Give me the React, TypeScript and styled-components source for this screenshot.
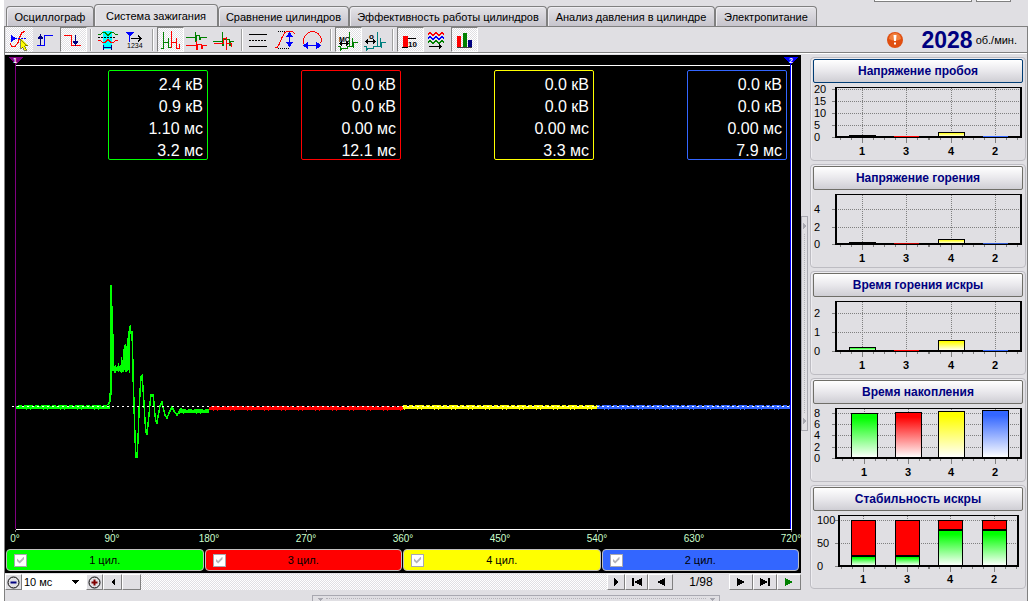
import React from "react";
import styled, { createGlobalStyle, css } from "styled-components";

const FACE = "#e0dfe3";
const NAVY = "#000080";
const DITHER = `repeating-conic-gradient(#fff 0 25%, ${FACE} 0 50%) 0 0 / 2px 2px`;

const GlobalStyle = createGlobalStyle`
  * { box-sizing: border-box; }
  body {
    margin: 0;
    background: #fff;
    color: #000;
    font: 11px/14px "Liberation Sans", Arial, sans-serif;
  }
  button, select { font: inherit; color: inherit; }
`;

const Page = styled.div`
  display: flex;
  flex-direction: column;
  min-height: 100vh;
  margin: 0 4px;
  background: ${FACE};
`;

const Header = styled.header`
  display: flex;
  justify-content: space-between;
  height: 26px;
`;

const TabList = styled.nav`
  display: flex;
  align-items: flex-end;
  padding-left: 2px;
`;

const Tab = styled.button<{ $width: number; $active?: boolean }>`
  width: ${(p) => p.$width}px;
  height: ${(p) => (p.$active ? 23 : 20)}px;
  margin-bottom: ${(p) => (p.$active ? -1 : 0)}px;
  padding: 0;
  border: 1px solid #808080;
  border-bottom: 0;
  border-radius: 4px 4px 0 0;
  background: ${(p) => (p.$active ? FACE : "linear-gradient(#e4e3e7, #c6c4cc)")};
  box-shadow: inset 1px 1px 0 #eeedf1;
  white-space: nowrap;
`;

const CaptionBoxes = styled.div`
  display: flex;
  gap: 4px;
  padding-right: 17px;
`;

const CaptionBox = styled.span<{ $width: number }>`
  width: ${(p) => p.$width}px;
  height: 2px;
  background: #fff;
  border: 1px solid #808080;
  border-top: 0;
`;

const Body = styled.div`
  flex: 1;
  display: flex;
  flex-direction: column;
  border: 1px solid #808080;
  border-bottom: 0;
`;

const Toolbar = styled.div`
  display: flex;
  align-items: flex-start;
  height: 28px;
  padding: 0 10px 0 1px;
  background: linear-gradient(#808080, #808080) 0 25px / 100% 1px no-repeat,
    linear-gradient(#fff, #fff) 0 26px / 100% 1px no-repeat;
`;

const ToolButton = styled.button<{ $state?: "pressed" | "hot" }>`
  display: block;
  width: 27px;
  height: 25px;
  padding: 0;
  border: 1px solid transparent;
  background: transparent;
  ${(p) => p.$state && css`background: ${DITHER};`}
  ${(p) =>
    p.$state === "pressed" &&
    css`border-color: #808080 #fff #fff #808080;`}
  svg { display: block; width: 25px; height: 23px; }
`;

const Separator = styled.span`
  width: 2px;
  height: 22px;
  margin: 2px 3px 0;
  border-left: 1px solid #a0a0a0;
  border-right: 1px solid #fff;
`;

const Rpm = styled.div`
  display: flex;
  align-items: center;
  height: 26px;
  margin-left: auto;
  gap: 3px;
  svg { margin-right: 15px; }
`;

const RpmValue = styled.strong`
  color: ${NAVY};
  font-size: 23px;
  line-height: 24px;
`;

const Main = styled.main`
  flex: 1;
  display: flex;
`;

const ScopeColumn = styled.section`
  flex: 1;
  min-width: 0;
  display: flex;
  flex-direction: column;
`;

const Scope = styled.div`
  position: relative;
  flex: 1;
  display: flex;
  flex-direction: column;
  min-height: 300px;
  background: #000;
`;

const Plot = styled.svg`
  flex: 1;
  width: 100%;
  min-height: 0;
  height: 0;
`;

const Axis = styled.div`
  display: flex;
  justify-content: space-between;
  height: 17px;
  padding: 0 10px;
  color: #ccffcc;
  font-size: 10px;
  line-height: 14px;
  overflow: hidden;
`;

const AxisLabel = styled.span`
  display: flex;
  justify-content: center;
  width: 0;
`;

const Readouts = styled.div`
  position: absolute;
  top: 15px;
  left: 10px;
  right: 14px;
  display: grid;
  grid-template-columns: repeat(4, 1fr);
  justify-items: end;
`;

const Readout = styled.div<{ $color: string }>`
  width: 100px;
  padding: 3px 4px 0 0;
  height: 90px;
  border: 1px solid ${(p) => p.$color};
  border-radius: 2px;
  color: #fff;
  font-size: 16px;
  line-height: 22px;
  text-align: right;
`;

const Legend = styled.div`
  display: grid;
  grid-template-columns: repeat(4, 1fr);
  gap: 1px;
  padding: 0 2px 2px 1px;
  background: #000;
`;

const Cylinder = styled.label<{ $color: string }>`
  display: grid;
  grid-template-columns: 1fr auto 1fr;
  align-items: center;
  height: 22px;
  padding: 0 7px;
  border: 1px solid #c0c0c0;
  border-radius: 4px;
  background: ${(p) => p.$color};
`;

const Check = styled.input`
  appearance: none;
  display: grid;
  place-items: center;
  width: 13px;
  height: 13px;
  margin: 0;
  border: 1px solid #a8a8b0;
  background: #fff;
  &::after {
    content: "";
    width: 7px;
    height: 7px;
    background: #b4b3b9;
    clip-path: polygon(0 30%, 38% 64%, 100% 0, 100% 38%, 38% 100%, 0 66%);
  }
`;

const Transport = styled.div`
  display: flex;
  height: 18px;
  padding: 1px 0;
`;

const FlatButton = styled.button<{ $width: number }>`
  display: flex;
  align-items: center;
  justify-content: center;
  width: ${(p) => p.$width}px;
  height: 16px;
  padding: 0;
  border: 1px solid;
  border-color: #fff #808080 #808080 #fff;
  background: ${FACE};
`;

const ScaleBox = styled.div`
  display: flex;
  align-items: center;
  width: 64px;
  padding-right: 7px;
  background: #fff;
`;

const ScaleSelect = styled.select`
  flex: 1;
  appearance: none;
  padding: 0 2px;
  border: 0;
  background: #fff;
`;

const Track = styled.div`
  flex: 1;
  background: ${DITHER};
`;

const Position = styled.output`
  width: 56px;
  text-align: center;
  font-size: 12px;
  line-height: 16px;
`;

const Splitter = styled.div`
  display: flex;
  align-items: center;
  width: 7px;
  margin-right: 2px;
`;

const SplitterGrip = styled.div`
  display: flex;
  flex-direction: column;
  justify-content: space-between;
  align-items: center;
  width: 7px;
  height: 215px;
  padding: 4px 0;
  border: 1px solid #a8a8b0;
`;

const GripDots = styled.span<{ $row?: boolean }>`
  flex: 1;
  margin: 3px;
  border: 0 dotted #b4b3b9;
  ${(p) => (p.$row ? css`border-top-width: 1px;` : css`border-left-width: 1px;`)}
`;

const Footer = styled.footer`
  display: flex;
  justify-content: center;
  height: 11px;
  padding: 4px 1px 0 0;
`;

const FooterGrip = styled.div`
  display: flex;
  align-items: center;
  width: 408px;
  height: 7px;
  padding: 0 4px;
  border: 1px solid #a8a8b0;
`;

const Gauges = styled.aside`
  display: flex;
  flex-direction: column;
  gap: 3px;
  width: 217px;
  padding: 2px 1px 2px 0;
`;

const Gauge = styled.section`
  height: 104px;
  padding: 1px 2px;
  border: 1px solid #bdbcc2;
  border-radius: 4px;
  box-shadow: inset 1px 1px 0 #eeedf1;
`;

const GaugeTitle = styled.button<{ $focused?: boolean }>`
  display: block;
  width: 100%;
  height: 24px;
  padding: 0;
  border: 1px solid ${(p) => (p.$focused ? "#003c74" : "#6f6e68")};
  border-radius: 2px;
  background: linear-gradient(#fff, #e9e8ec 50%, #cfced4);
  color: ${NAVY};
  font-size: 12px;
  font-weight: bold;
`;

const GaugeChart = styled.svg`
  display: block;
  margin-left: -1px;
  font-family: "Liberation Sans", Arial, sans-serif;
  font-size: 12px;
`;

/* ---------- toolbar icons ---------- */

const GREEN = "#008000";
const RED = "#ff0000";
const BLUE = "#0000ff";
const TEAL = "#008080";

type Tool = { name: string; x: number; state?: "pressed" | "hot"; art: React.ReactNode };

const line = (d: string, stroke: string, dash?: string) => (
  <path d={d} fill="none" stroke={stroke} strokeDasharray={dash} />
);

const toolGroups: Tool[][] = [
  [
    {
      name: "Курсор", x: 7, state: "hot",
      art: <>
        {line("M10 43.500l2 3h3l3-4 2-6 2-4 3-1", RED)}
        <path d="M11 35v7l5-3.500z" fill={BLUE} />
        {line("M15 38.500h11", BLUE, "2 1")}
        <path d="M20.500 38.500v10l2-2 2 4 2-1-2-4h3z" fill="#ffff00" stroke="#404000" strokeWidth="0.600" />
      </>,
    },
    {
      name: "Фронт", x: 34,
      art: <>{line("M37 45.500h7.500v-10h8.500", BLUE)}{line("M40.500 45v-9", NAVY)}<path d="M40.500 34l3 5h-6z" fill={NAVY} /></>,
    },
    {
      name: "Спад", x: 61, state: "pressed",
      art: <>{line("M64 35.500h7.500v10h9", RED)}{line("M75.500 35v9", NAVY)}<path d="M75.500 46l3-5h-6z" fill={NAVY} /></>,
    },
  ],
  [
    {
      name: "Диапазон", x: 96,
      art: <>
        <path d="M103 31h9v18h-9z" fill="#00ffff" />
        {line("M98 34.500h2l3-2h2l3 3 3-3h2l3 2h2", GREEN)}
        {line("M98 37.500h18", "#000", "2 1")}
        {line("M98 40.500h2l3 2h2l3-3 3 3h2l3-2h2", RED)}
        {line("M103.500 45v5M111.500 45v5M104 47.500h8", NAVY)}
      </>,
    },
    {
      name: "Нумерация", x: 123,
      art: <>
        <path d="M126 32h8l-4 5z" fill={BLUE} />
        {line("M129.500 36v6", BLUE)}
        {line("M131 38.500h10M138 35.500l3 3-3 3", "#000")}
        <text x="127" y="48" fontSize="7" fontFamily="Liberation Sans">1234</text>
      </>,
    },
  ],
  [
    {
      name: "Последовательно", x: 158, state: "pressed",
      art: <>
        {line("M161 48.500h2.500v-17v11h5v-5v10h2.500v-4", GREEN)}
        {line("M171.500 31v17v-6h5v-4v10h3v-4", RED)}
      </>,
    },
    {
      name: "Парад", x: 185,
      art: <>
        {line("M186 37.500h9.500v-6v10h1v-6h3v4h1v-2h6", GREEN)}
        {line("M186 45.500h10.500v-5v9h1v-5h4v4h1v-3h4", RED)}
      </>,
    },
    {
      name: "Наложение", x: 212,
      art: <>
        {line("M213 41.500h9.500v-10v14h1v-6h6v6h1v-4h3", GREEN)}
        {line("M214 43.500h9v-5h3.500v11v-13v7h5v3", RED)}
      </>,
    },
  ],
  [
    {
      name: "Уровни", x: 247,
      art: <>{line("M249 34.500h18M249 46.500h18", "#000")}{line("M249 40.500h18", "#000", "2 1")}</>,
    },
    {
      name: "Амплитуда", x: 274,
      art: <>
        {line("M275 47.500h2l2-3 3-7 3-5 4-1.500h3l3 3", RED)}
        {line("M278 31.500h8M278 48.500h11", "#000", "1 1")}
        {line("M289.500 35v9", BLUE)}
        <path d="M289.500 32l3.500 5h-7zM289.500 47l3.500-5h-7z" fill={BLUE} />
      </>,
    },
    {
      name: "Период", x: 301,
      art: <>
        {line("M304 43.500c-2-5 3-12 8.500-12s11 7 8 12", RED)}
        {line("M306 45.500h12", BLUE)}
        <path d="M303 45.500l5-4v8zM321 45.500l-5-4v8z" fill={BLUE} />
      </>,
    },
  ],
  [
    {
      name: "Время", x: 336, state: "pressed",
      art: <>
        <text x="339" y="42" fontSize="7" fontWeight="bold" fontFamily="Liberation Sans">МС</text>
        {line("M340 43.500h8M342 41.500l-2 2 2 2M346 41.500l2 2-2 2", "#000")}
        {line("M338 46.500h2v4l2-2h5v-2h2.500v-15v15h3v-9v5h1v5v-5h4", GREEN)}
      </>,
    },
    {
      name: "Угол", x: 363,
      art: <>
        <text x="369" y="39" fontSize="8" fontWeight="bold" fontFamily="Liberation Sans">o</text>
        {line("M366 41.500h9M368 39.500l-2 2 2 2M373 39.500l2 2-2 2", "#000")}
        {line("M364 46.500h2v4l2-2h5v-2h4.500v-15v15h3v-9v5h1v5v-5h4", TEAL)}
      </>,
    },
  ],
  [
    {
      name: "Значения", x: 398, state: "pressed",
      art: <>
        <path d="M403 36h5v12h-5z" fill={RED} />
        {line("M402 47.500h6M408 38.500h8", "#000")}
        <text x="408" y="47" fontSize="8" fontWeight="bold" fontFamily="Liberation Sans">10</text>
      </>,
    },
    {
      name: "Кривые", x: 425,
      art: <>
        {line("M428 34.500l2-2 3 3 3-3 3 3 3-3 2 2", RED)}
        {line("M428 38.500l2-2 3 3 3-3 3 3 3-3 2 2", BLUE)}
        {line("M428 42.500l2-2 3 3 3-3 3 3 3-3 2 2", GREEN)}
        {line("M429 46.500h12M439 44.500l2 2-2 2", "#000")}
      </>,
    },
    {
      name: "Гистограммы", x: 452, state: "pressed",
      art: <>
        <path d="M457 36h4v12h-4z" fill={RED} />
        <path d="M463 33h4v15h-4z" fill={GREEN} />
        <path d="M468 40h4v8h-4z" fill={NAVY} />
        {line("M457 47.500h15", "#404040")}
      </>,
    },
  ],
];

/* ---------- oscillogram ---------- */

const CYLINDERS = [
  { id: 1, color: "#00ff00", frame: "#00ff00", values: ["2.4 кВ", "0.9 кВ", "1.10 мс", "3.2 мс"] },
  { id: 3, color: "#ff0000", frame: "#ff0000", values: ["0.0 кВ", "0.0 кВ", "0.00 мс", "12.1 мс"] },
  { id: 4, color: "#ffff00", frame: "#ffff00", values: ["0.0 кВ", "0.0 кВ", "0.00 мс", "3.3 мс"] },
  { id: 2, color: "#3366ff", frame: "#3366ff", values: ["0.0 кВ", "0.0 кВ", "0.00 мс", "7.9 мс"] },
];

/* Vertical strokes of a slightly noisy flat signal. */
function noise(from: number, to: number, y: number) {
  let d = "";
  for (let x = from; x < to; x++) {
    const r = (x * 7919 + 13 * x * x) % 17;
    const top = y - 2 - (r === 3 ? 1 : 0) + (r % 5 === 0 ? 1 : 0);
    const bottom = y + 2 + (r % 4 === 1 ? 1 : 0);
    d += `M${x + 0.5} ${top}V${bottom}`;
  }
  return d;
}

const SPARK_COMB =
  "M109.500 318V311M110.500 318V310M111.500 316V312M112.500 316V311M113.500 317V308M114.500 316V311M115.500 317V310M116.500 318V302M117.500 317V305M118.500 317V294M119.500 315V290M120.500 317V289M121.500 317V291M122.500 316V283M123.500 315V276M124.500 318V273";

const SPARK =
  "M103 350L105 346V339H106V230V256M108 279V316M107 251V316M107 316L109 312M125 273L125.500 270V279L127 276L128 312V318L129 350L130 383L131 402H132L133 385L134 357L135 337L136 322L137 321L138 333L139 349L140 366L141 377L142 380L143 370L144 360L145 348L146 340H148L149 348L150 361L151 366L152 368L153 362L155 351L157 347L158 352L160 360L162 363L164 358L167 352L169 356L172 360L176 354L178 355";

const ANGLES = [0, 90, 180, 270, 360, 450, 540, 630, 720];

function Oscillogram() {
  return (
    <Plot viewBox="0 0 796 477" preserveAspectRatio="none" shapeRendering="crispEdges" fill="none">
      <path d="M11 10.500H785M11 474.500H787" stroke="#fff" />
      <path d={ANGLES.map((a, i) => `M${10.5 + i * 97} 475v2`).join("")} stroke="#808080" />
      <path d={noise(11, 105, 352)} stroke="#00ff00" />
      <path d={SPARK_COMB} stroke="#00ff00" />
      <path d={SPARK} stroke="#00ff00" strokeWidth="1.500" />
      <path d={noise(174, 204, 356)} stroke="#00ff00" />
      <path d={noise(204, 398, 353)} stroke="#ff0000" />
      <path d={noise(398, 592, 352)} stroke="#ffff00" />
      <path d={noise(592, 785, 352)} stroke="#3366ff" />
      <path d="M7 351.500H785" stroke="#fff" strokeDasharray="2 3" />
      <path d="M10.500 3V474" stroke="#800080" />
      <path d="M785.500 3V474" stroke="#0000ff" />
      <path d="M786.500 10V474" stroke="#fff" />
      <path d="M3 2H18L11 9H10Z" fill="#800080" />
      <path d="M778 2H793L786 9H785Z" fill="#0000ff" />
      <g fill="#fff" fontFamily="Liberation Sans" fontSize="7" fontWeight="bold" textAnchor="middle">
        <text x="10" y="8">1</text>
        <text x="786" y="8">2</text>
      </g>
    </Plot>
  );
}

/* ---------- bar gauges ---------- */

type Bar = { top: number; color: string; hairline?: boolean; lower?: number };
type GaugeData = {
  title: string;
  left: number;
  right: number;
  base: number;
  barWidth: number;
  centers: number[];
  ticks: { label: string; y: number }[];
  bars: Bar[];
};

const flat = { left: 24, right: 209, base: 54, barWidth: 26, centers: [50, 94, 139, 183] };

const gauges: GaugeData[] = [
  {
    ...flat, title: "Напряжение пробоя",
    ticks: [{ label: "20", y: 6 }, { label: "15", y: 18 }, { label: "10", y: 30 }, { label: "5", y: 42 }, { label: "0", y: 54 }],
    bars: [
      { top: 52, color: "#000" }, { top: 53, color: "#ff0000", hairline: true },
      { top: 49, color: "#ffff00" }, { top: 53, color: "#3366ff", hairline: true },
    ],
  },
  {
    ...flat, title: "Напряжение горения",
    ticks: [{ label: "4", y: 19 }, { label: "2", y: 37 }, { label: "0", y: 54 }],
    bars: [
      { top: 52, color: "#000" }, { top: 53, color: "#c00000", hairline: true },
      { top: 49, color: "#ffff00" }, { top: 53, color: "#3058d0", hairline: true },
    ],
  },
  {
    ...flat, title: "Время горения искры",
    ticks: [{ label: "2", y: 16 }, { label: "1", y: 35 }, { label: "0", y: 54 }],
    bars: [
      { top: 50, color: "#00ff00" }, { top: 53, color: "#ff0000", hairline: true },
      { top: 43, color: "#ffff00" }, { top: 53, color: "#3366ff", hairline: true },
    ],
  },
  {
    ...flat, title: "Время накопления", centers: [52, 96, 139, 183],
    ticks: [{ label: "8", y: 9 }, { label: "6", y: 20 }, { label: "4", y: 31 }, { label: "2", y: 43 }, { label: "0", y: 54 }],
    bars: [
      { top: 9, color: "#00ff00" }, { top: 8, color: "#ff0000" },
      { top: 7, color: "#ffff00" }, { top: 6, color: "#3366ff" },
    ],
  },
  {
    title: "Стабильность искры", left: 27, right: 206, base: 55, barWidth: 24, centers: [51, 95, 138, 182],
    ticks: [{ label: "100", y: 9 }, { label: "50", y: 32 }, { label: "0", y: 55 }],
    bars: [
      { top: 9, color: "#ff0000", lower: 45 }, { top: 9, color: "#ff0000", lower: 45 },
      { top: 9, color: "#ff0000", lower: 19 }, { top: 9, color: "#ff0000", lower: 19 },
    ],
  },
];

function GaugePlot({ data, index }: { data: GaugeData; index: number }) {
  const { left, right, base, barWidth, centers, ticks, bars } = data;
  const labelX = left === 24 ? 2 : 5;
  const minor = [-22, -11, 11, 22];
  return (
    <GaugeChart width="212" height="76" viewBox="0 0 212 76" role="img" aria-label={data.title}>
      <defs>
        {[...bars.map((b) => b.color), "#00ff00"].map((color, i) => (
          <linearGradient key={i} id={`fill-${index}-${i}`} x1="0" y1="0" x2="0" y2="1">
            <stop offset="0.100" stopColor={color} />
            <stop offset="1" stopColor="#fff" />
          </linearGradient>
        ))}
      </defs>
      <g shapeRendering="crispEdges" fill="none">
        {ticks.map((t) => (
          <g key={t.label} stroke="#808080">
            <path d={`M${left} ${t.y + 0.5}H${right}`} strokeDasharray="1 1" />
            <path d={`M${left - 4} ${t.y + 0.5}h4`} />
          </g>
        ))}
        {centers.map((c) => (
          <g key={c} stroke="#808080">
            <path d={`M${c + 0.5} 5V${base}`} strokeDasharray="1 1" />
            <path d={`M${c + 0.5} ${base}v6`} />
            {minor.map((m) => <path key={m} d={`M${c + m + 0.5} ${base}v3`} />)}
          </g>
        ))}
        <path d={`M${left - 1} 6V${base}`} stroke="#808080" strokeDasharray="1 2" />
        <path d={`M${left} 4.500H${right}`} stroke="#000" />
        <path d={`M${left} 4V${base + 1}M${right} 4V${base + 1}M${left} ${base}H${right}`} stroke="#000" strokeWidth="2" />
        {bars.map((b, i) => {
          const x = centers[i] - barWidth / 2 + 0.5;
          if (b.hairline) {
            return <rect key={i} x={centers[i] - 12} y={b.top} width="25" height="1" fill={b.color} />;
          }
          const split = b.lower !== undefined;
          return (
            <g key={i}>
              <rect x={x} y={b.top + 0.5} width={barWidth} height={Math.max(base - b.top - 1, 1)}
                fill={split ? b.color : `url(#fill-${index}-${i})`} stroke="#000" />
              {split && (
                <>
                  <rect x={x} y={b.lower! + 0.5} width={barWidth} height={base - b.lower! - 1}
                    fill={`url(#fill-${index}-4)`} stroke="#000" />
                  <path d={`M${x} ${b.lower}h${barWidth}`} stroke="#000" strokeWidth="2" />
                </>
              )}
            </g>
          );
        })}
      </g>
      {ticks.map((t) => (
        <text key={t.label} x={labelX} y={t.y + 4} fontSize="11">{t.label}</text>
      ))}
      {["1", "3", "4", "2"].map((label, i) => (
        <text key={label} x={centers[i]} y="72" textAnchor="middle" fontSize="11" fontWeight="bold">{label}</text>
      ))}
    </GaugeChart>
  );
}

const glyph = (d: string, fill = "#000", width = 12) => (
  <svg width={width} height="10" viewBox={`0 0 ${width} 10`} shapeRendering="crispEdges" aria-hidden>
    <path d={d} fill={fill} />
  </svg>
);

const tabs = [
  { label: "Осциллограф", width: 88 },
  { label: "Система зажигания", width: 124, active: true },
  { label: "Сравнение цилиндров", width: 131 },
  { label: "Эффективность работы цилиндров", width: 198 },
  { label: "Анализ давления в цилиндре", width: 168 },
  { label: "Электропитание", width: 102 },
];

export default function App() {
  return (
    <>
      <GlobalStyle />
      <Page>
        <Header>
          <TabList>
            {tabs.map((t) => (
              <Tab key={t.label} $width={t.width} $active={t.active}>{t.label}</Tab>
            ))}
          </TabList>
          <CaptionBoxes>
            <CaptionBox $width={98} />
            <CaptionBox $width={35} />
          </CaptionBoxes>
        </Header>
        <Body>
          <Toolbar>
            {toolGroups.map((group, g) => (
              <React.Fragment key={g}>
                {g > 0 && <Separator />}
                {group.map((tool) => (
                  <ToolButton key={tool.name} $state={tool.state} aria-label={tool.name}>
                    <svg viewBox={`${tool.x} 28 25 23`} shapeRendering="crispEdges" aria-hidden>{tool.art}</svg>
                  </ToolButton>
                ))}
              </React.Fragment>
            ))}
            <Rpm>
              <svg width="16" height="16" viewBox="0 0 16 16" aria-hidden>
                <circle cx="8" cy="8" r="8" fill="#e04e10" />
                <path d="M2 7a6 6 0 0 1 12 0q-6 3-12 0z" fill="#f0803c" />
                <path d="M6.500 3h3l-0.500 6h-2zM7 10.500h2v2h-2z" fill="#fff" />
              </svg>
              <RpmValue>2028</RpmValue>
              <span>об./мин.</span>
            </Rpm>
          </Toolbar>
          <Main>
            <ScopeColumn>
              <Scope>
                <Oscillogram />
                <Axis>
                  {ANGLES.map((a) => <AxisLabel key={a}>{a}°</AxisLabel>)}
                </Axis>
                <Readouts>
                  {CYLINDERS.map((c) => (
                    <Readout key={c.id} $color={c.frame}>
                      {c.values.map((v, i) => <div key={i}>{v}</div>)}
                    </Readout>
                  ))}
                </Readouts>
              </Scope>
              <Legend>
                {CYLINDERS.map((c) => (
                  <Cylinder key={c.id} $color={c.color}>
                    <Check type="checkbox" defaultChecked disabled />
                    <span>{c.id} цил.</span>
                  </Cylinder>
                ))}
              </Legend>
              <Transport>
                <FlatButton $width={17} aria-label="Уменьшить">
                  <svg width="13" height="13" viewBox="0 0 13 13" aria-hidden>
                    <circle cx="6.500" cy="6.500" r="5.500" fill="none" stroke="#000" />
                    <path d="M3.500 5.500h6v2h-6z" fill={NAVY} />
                  </svg>
                </FlatButton>
                <ScaleBox>
                  <ScaleSelect aria-label="Развёртка" defaultValue="10">
                    <option value="10">10 мс</option>
                  </ScaleSelect>
                  {glyph("M0 3h8l-4 4z", "#000", 8)}
                </ScaleBox>
                <FlatButton $width={17} aria-label="Увеличить">
                  <svg width="13" height="13" viewBox="0 0 13 13" aria-hidden>
                    <circle cx="6.500" cy="6.500" r="5.500" fill="none" stroke="#000" />
                    <path d="M3.500 5.500h2v-2h2v2h2v2h-2v2h-2v-2h-2z" fill="#800000" />
                  </svg>
                </FlatButton>
                <FlatButton $width={19} aria-label="Прокрутить назад">{glyph("M8 1v8l-4-4z")}</FlatButton>
                <FlatButton $width={19} aria-label="Ползунок" />
                <Track />
                <FlatButton $width={18} aria-label="Прокрутить вперёд">{glyph("M4 1v8l4-4z")}</FlatButton>
                <FlatButton $width={23} aria-label="Первый">{glyph("M1 1h2v8h-2zM11 1v8l-8-4z")}</FlatButton>
                <FlatButton $width={25} aria-label="Предыдущий">{glyph("M10 1v8l-8-4z")}</FlatButton>
                <Position>1/98</Position>
                <FlatButton $width={24} aria-label="Следующий">{glyph("M2 1v8l8-4z")}</FlatButton>
                <FlatButton $width={24} aria-label="Последний">{glyph("M9 1h2v8h-2zM1 1v8l8-4z")}</FlatButton>
                <FlatButton $width={24} aria-label="Пуск">{glyph("M2 1v8l8-4z", GREEN)}</FlatButton>
              </Transport>
            </ScopeColumn>
            <Splitter>
              <SplitterGrip>
                {glyph("M0 2v6l3-3z", "#a8a8b0", 3)}
                <GripDots />
                {glyph("M0 2v6l3-3z", "#a8a8b0", 3)}
              </SplitterGrip>
            </Splitter>
            <Gauges>
              {gauges.map((g, i) => (
                <Gauge key={g.title}>
                  <GaugeTitle $focused={i === 0}>{g.title}</GaugeTitle>
                  <GaugePlot data={g} index={i} />
                </Gauge>
              ))}
            </Gauges>
          </Main>
          <Footer>
            <FooterGrip>
              {glyph("M0 4h6l-3 3z", "#a8a8b0", 6)}
              <GripDots $row />
              {glyph("M0 4h6l-3 3z", "#a8a8b0", 6)}
            </FooterGrip>
          </Footer>
        </Body>
      </Page>
    </>
  );
}
